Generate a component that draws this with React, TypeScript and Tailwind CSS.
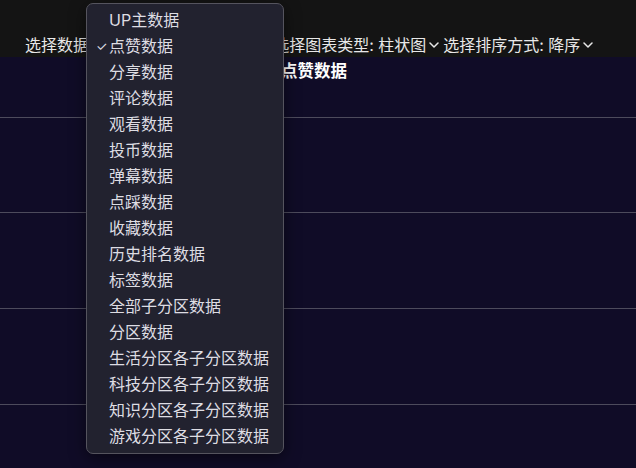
import React from "react";

const items = [
  "UP主数据",
  "点赞数据",
  "分享数据",
  "评论数据",
  "观看数据",
  "投币数据",
  "弹幕数据",
  "点踩数据",
  "收藏数据",
  "历史排名数据",
  "标签数据",
  "全部子分区数据",
  "分区数据",
  "生活分区各子分区数据",
  "科技分区各子分区数据",
  "知识分区各子分区数据",
  "游戏分区各子分区数据",
];

function Chevron() {
  return (
    <svg width="10" height="6" viewBox="0 0 10 6" className="ml-[3px] mr-[4px]">
      <polyline points="1,1 5,5 9,1" fill="none" stroke="#e8e8e8" strokeWidth="1.5" strokeLinecap="round" strokeLinejoin="round" />
    </svg>
  );
}

export default function App() {
  return (
    <div className="relative w-[636px] h-[468px] overflow-hidden bg-[#100c27] font-['Inter','Noto_Sans_CJK_SC',sans-serif] text-[16px]">
      <div className="h-[57px] bg-[#141414] pt-[35px] pl-[25px] text-[#e8e8e8]">
        <div className="flex items-center leading-[20px] whitespace-nowrap">
          <span>选择数据:&nbsp;</span>
          <span className="w-[158px]">点赞数据</span>
          <Chevron />
          <span>选择图表类型:&nbsp;柱状图</span>
          <Chevron />
          <span>选择排序方式:&nbsp;降序</span>
          <Chevron />
        </div>
      </div>
      <div className="flex flex-col">
        <div className="h-[60px] pt-[4px] pl-[248px] text-white font-bold leading-[20px] text-[16.5px]">视频点赞数据</div>
        <div className="h-[95px] border-t border-[#4d4b5c]" />
        <div className="h-[96px] border-t border-[#4d4b5c]" />
        <div className="h-[96px] border-t border-[#4d4b5c]" />
        <div className="h-[64px] border-t border-[#4d4b5c]" />
      </div>
      <div className="absolute left-[86px] top-[3px] w-[198px] h-[451px] rounded-[7px] border border-[#55545e] bg-[#22222f] py-[3px] shadow-[0_4px_16px_rgba(0,0,0,0.5)]">
        {items.map((t) => (
          <div key={t} className="relative h-[26px] flex items-center pl-[22px] text-[#dedde3] leading-[20px] whitespace-nowrap">
            {t === "点赞数据" && (
              <span className="absolute left-[9px] text-[13px]">✓</span>
            )}
            {t}
          </div>
        ))}
      </div>
    </div>
  );
}
